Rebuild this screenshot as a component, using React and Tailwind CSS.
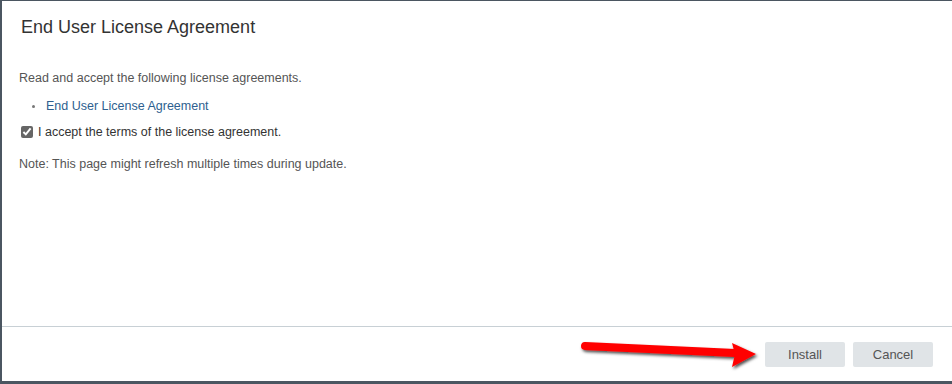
export default function App() {
  return (
    <div className="w-[952px] h-[384px] bg-[#4b5661] overflow-hidden" style={{ fontFamily: '"Liberation Sans", Arial, sans-serif' }}>
      <div className="relative ml-[2px] mt-[1px] w-[950px] h-[380px] bg-white flex flex-col">
        <div className="h-[50px] pl-[19px] pt-[15px]">
          <h1 className="text-[18px] text-[#333] leading-[22px]">End User License Agreement</h1>
        </div>
        <div className="flex-1 pl-[17px] pt-[19px] text-[12.5px] text-[#555]">
          <p className="leading-[16px]">Read and accept the following license agreements.</p>
          <ul className="mt-[12px] pl-[13px]">
            <li className="flex items-center leading-[16px]">
              <span className="w-[3px] h-[3px] rounded-full bg-[#777] mr-[11px]"></span>
              <a className="text-[#2e5f8f]">End User License Agreement</a>
            </li>
          </ul>
          <label className="mt-[10px] flex items-center leading-[16px] text-[#333]">
            <input type="checkbox" defaultChecked className="w-[12px] h-[12px] m-0 mr-[5px] ml-[2px] accent-[#666]" />
            I accept the terms of the license agreement.
          </label>
          <p className="mt-[16px] leading-[16px]">Note: This page might refresh multiple times during update.</p>
        </div>
        <div className="h-[55px] border-t border-[#c8d0d5] flex justify-end items-start pt-[15px] pr-[19px] gap-[8px]">
          <button className="w-[80px] h-[25px] rounded-[2px] bg-[#e0e4e7] text-[13px] text-[#555]">Install</button>
          <button className="w-[80px] h-[25px] rounded-[2px] bg-[#e0e4e7] text-[13px] text-[#555]">Cancel</button>
        </div>
        <svg className="absolute left-[573px] top-[338px]" width="190" height="36" viewBox="0 0 190 36">
          <defs>
            <filter id="sh" x="-10%" y="-40%" width="130%" height="200%">
              <feDropShadow dx="1.5" dy="2" stdDeviation="1.5" floodColor="#000" floodOpacity="0.7" />
            </filter>
          </defs>
          <g filter="url(#sh)">
            <path d="M10 7 L160 14" stroke="#ff0000" strokeWidth="8" strokeLinecap="round" fill="none" />
            <path d="M157 4 L181 15 L157 28 L160 15 Z" fill="#ff0000" />
          </g>
        </svg>
      </div>
    </div>
  );
}
